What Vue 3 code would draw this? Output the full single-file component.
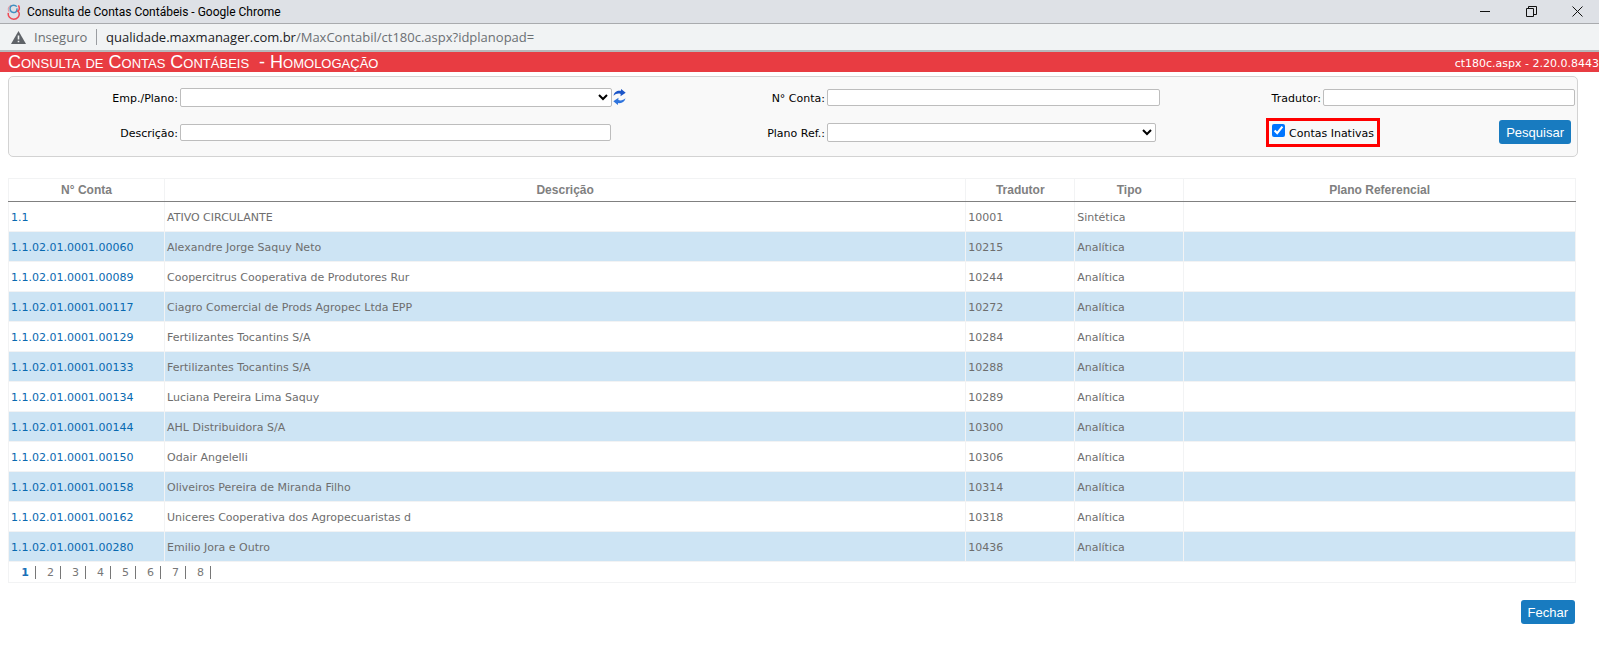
<template>
  <div class="window">
    <header class="titlebar">
      <svg class="favicon" viewBox="0 0 14 16" aria-hidden="true">
        <path d="M2.400 8.200C.4 5.800 1.200 2.300 4 1.200" fill="none" stroke="#e98a93" stroke-width="1" />
        <path d="M9.800 2.600C8.300.7 5 .6 3.600 2.700 2.100 5 3.400 8.300 6.400 8.600c2.600.2 4-1.900 3.500-4.200" fill="none" stroke="#3f8fc0" stroke-width="1.500" />
        <path d="M11.400 1.400c1.200 1.900 1.200 4-.2 5.600M1.300 8.800C.7 12.300 3.200 15.200 6.700 15.200c3.600 0 6.200-3 5.400-6.400-.5-1.100-1.300-1.700-2.300-2" fill="none" stroke="#ee4a55" stroke-width="1.500" />
      </svg>
      <span class="window-title">Consulta de Contas Contábeis - Google Chrome</span>
      <div class="window-controls">
        <button type="button" aria-label="Minimizar">
          <svg viewBox="0 0 11 11"><path d="M0 5.500h10" /></svg>
        </button>
        <button type="button" aria-label="Restaurar">
          <svg viewBox="0 0 11 11"><path d="M.5 2.500h7v8h-7zM2.500 2.500v-2h8v8h-3" /></svg>
        </button>
        <button type="button" aria-label="Fechar janela">
          <svg viewBox="0 0 11 11"><path d="M.5.5l10 10M10.500.5l-10 10" /></svg>
        </button>
      </div>
    </header>

    <div class="addressbar">
      <svg class="warning" viewBox="0 0 15 13" aria-hidden="true">
        <path d="M7.500 0L15 13H0z" fill="#5f6368" />
        <path d="M6.700 4.500h1.600v4H6.700zM6.700 9.700h1.600v1.600H6.700z" fill="#f1f3f4" />
      </svg>
      <span class="insecure">Inseguro</span>
      <span class="url"><span class="host">qualidade.maxmanager.com.br</span>/MaxContabil/ct180c.aspx?idplanopad=</span>
    </div>

    <div class="page-header">
      <h1>Consulta de Contas Contábeis &nbsp;- Homologação</h1>
      <span class="version">ct180c.aspx - 2.20.0.8443</span>
    </div>

    <main>
      <form class="filters" @submit.prevent>
        <label for="plano">Emp./Plano:</label>
        <div class="field">
          <select id="plano"></select>
          <button type="button" class="refresh" aria-label="Atualizar">
            <svg viewBox="0 0 13 16">
              <path d="M.6 6.700C1 3.200 4.400 1.300 7.800 2L8.100 0l4.600 3.800-5.200 3.400.2-2.300C5.200 4.200 2.600 4.700.6 6.700z" fill="#1b55c8" />
              <path d="M12.400 9.300c-.4 3.500-3.800 5.400-7.200 4.700L4.900 16 .3 12.200l5.200-3.400-.2 2.300c2.500.7 5.100.2 7.100-1.800z" fill="#2f74dd" />
            </svg>
          </button>
        </div>

        <label for="conta">N° Conta:</label>
        <div class="field"><input id="conta" type="text" /></div>

        <label for="tradutor">Tradutor:</label>
        <div class="field"><input id="tradutor" type="text" /></div>

        <label for="descricao">Descrição:</label>
        <div class="field field-descricao"><input id="descricao" type="text" /></div>

        <label for="planoRef">Plano Ref.:</label>
        <div class="field field-ref"><select id="planoRef"></select></div>

        <div class="actions">
          <div class="inactive">
            <input id="inativas" v-model="inativas" type="checkbox" />
            <label for="inativas">Contas Inativas</label>
          </div>
          <button type="submit" class="btn">Pesquisar</button>
        </div>
      </form>

      <table class="accounts">
        <colgroup>
          <col class="col-conta" />
          <col />
          <col class="col-small" />
          <col class="col-small" />
          <col class="col-ref" />
        </colgroup>
        <thead>
          <tr>
            <th v-for="c in colunas" :key="c">{{ c }}</th>
          </tr>
        </thead>
        <tbody>
          <tr v-for="c in contas" :key="c.conta">
            <td><a href="#">{{ c.conta }}</a></td>
            <td>{{ c.descricao }}</td>
            <td>{{ c.tradutor }}</td>
            <td>{{ c.tipo }}</td>
            <td></td>
          </tr>
        </tbody>
        <tfoot>
          <tr>
            <td colspan="5">
              <nav class="pager">
                <a v-for="p in 8" :key="p" href="#" :class="{ current: p === pagina }" @click.prevent="pagina = p">{{ p }}</a>
              </nav>
            </td>
          </tr>
        </tfoot>
      </table>

      <div class="footer">
        <button type="button" class="btn">Fechar</button>
      </div>
    </main>
  </div>
</template>

<script setup>
import { ref } from 'vue'

const inativas = ref(true)
const pagina = ref(1)

const colunas = ['N° Conta', 'Descrição', 'Tradutor', 'Tipo', 'Plano Referencial']

const contas = [
  { conta: '1.1', descricao: 'ATIVO CIRCULANTE', tradutor: '10001', tipo: 'Sintética' },
  { conta: '1.1.02.01.0001.00060', descricao: 'Alexandre Jorge Saquy Neto', tradutor: '10215', tipo: 'Analítica' },
  { conta: '1.1.02.01.0001.00089', descricao: 'Coopercitrus Cooperativa de Produtores Rur', tradutor: '10244', tipo: 'Analítica' },
  { conta: '1.1.02.01.0001.00117', descricao: 'Ciagro Comercial de Prods Agropec Ltda EPP', tradutor: '10272', tipo: 'Analítica' },
  { conta: '1.1.02.01.0001.00129', descricao: 'Fertilizantes Tocantins S/A', tradutor: '10284', tipo: 'Analítica' },
  { conta: '1.1.02.01.0001.00133', descricao: 'Fertilizantes Tocantins S/A', tradutor: '10288', tipo: 'Analítica' },
  { conta: '1.1.02.01.0001.00134', descricao: 'Luciana Pereira Lima Saquy', tradutor: '10289', tipo: 'Analítica' },
  { conta: '1.1.02.01.0001.00144', descricao: 'AHL Distribuidora S/A', tradutor: '10300', tipo: 'Analítica' },
  { conta: '1.1.02.01.0001.00150', descricao: 'Odair Angelelli', tradutor: '10306', tipo: 'Analítica' },
  { conta: '1.1.02.01.0001.00158', descricao: 'Oliveiros Pereira de Miranda Filho', tradutor: '10314', tipo: 'Analítica' },
  { conta: '1.1.02.01.0001.00162', descricao: 'Uniceres Cooperativa dos Agropecuaristas d', tradutor: '10318', tipo: 'Analítica' },
  { conta: '1.1.02.01.0001.00280', descricao: 'Emilio Jora e Outro', tradutor: '10436', tipo: 'Analítica' }
]
</script>

<style>
body {
  background: #fff;
}
</style>

<style scoped>
.window {
  font-family: Verdana, "DejaVu Sans", sans-serif;
  font-size: 11px;
  color: #000;
}

.window * {
  box-sizing: border-box;
}

.titlebar {
  display: flex;
  align-items: center;
  height: 24px;
  padding: 0 16px 0 7px;
  background: #dee1e6;
  border-bottom: 1px solid #a9abae;
  font-family: "Segoe UI", Roboto, sans-serif;
  font-size: 12px;
}

.favicon {
  width: 14px;
  height: 16px;
  margin-right: 6px;
}

.window-controls {
  display: flex;
  gap: 35px;
  margin-left: auto;
}

.window-controls button {
  display: flex;
  padding: 0;
  border: 0;
  background: none;
}

.window-controls svg {
  width: 11px;
  height: 11px;
  fill: none;
  stroke: #111;
}

.addressbar {
  display: flex;
  align-items: center;
  height: 28px;
  padding: 0 11px;
  background: #f1f3f4;
  border-bottom: 2px solid #b6b8ba;
  font-family: "Segoe UI", "Open Sans", sans-serif;
  font-size: 13px;
  color: #6b6f73;
}

.warning {
  width: 15px;
  height: 13px;
  margin-right: 8px;
}

.insecure {
  width: 63px;
  margin-right: 9px;
  line-height: 16px;
  border-right: 1px solid #9a9da1;
}

.host {
  color: #202124;
}

.page-header {
  display: flex;
  align-items: center;
  justify-content: space-between;
  height: 20px;
  padding-left: 8px;
  background: #e83c42;
  color: #fff;
}

.page-header h1 {
  margin: 0;
  font-family: Arial, "Liberation Sans", sans-serif;
  font-size: 18px;
  font-weight: 400;
  font-variant: small-caps;
  line-height: 20px;
}

.version {
  padding-top: 2px;
}

main {
  padding: 4px 23px 0 8px;
}

.filters {
  display: grid;
  grid-template-columns:
    minmax(0, 171fr) minmax(0, 447fr) minmax(0, 200fr)
    minmax(0, 333fr) minmax(0, 163fr) minmax(0, 252fr);
  grid-template-rows: 35px 34px;
  align-items: center;
  margin-right: -2px;
  padding: 3px 2px 7px 0;
  background: #f9f9f9;
  border: 1px solid #d3d3d3;
  border-radius: 5px;
}

.filters > label {
  padding: 2px 2px 0 0;
  text-align: right;
}

.field {
  display: flex;
  align-items: center;
}

.field input,
.field select {
  flex: 1;
  min-width: 0;
  height: 17px;
  padding: 0 2px;
  background-color: #fff;
  border: 1px solid #bdbdbd;
  border-radius: 2px;
}

.field select {
  height: 19px;
}

.field-descricao {
  padding-right: 16px;
}

.field-ref {
  padding-right: 4px;
}

.refresh {
  display: flex;
  margin-left: 1px;
  padding: 0 1px 1px 0;
  border: 0;
  background: none;
}

.refresh svg {
  width: 13px;
  height: 16px;
}

.actions {
  grid-column: span 2;
  display: flex;
  align-items: center;
  justify-content: space-between;
  padding: 0 4px 0 106px;
}

.inactive {
  display: flex;
  align-items: center;
  gap: 4px;
  height: 29px;
  padding: 0 3px;
  border: 3px solid #f00;
}

.inactive input {
  width: 13px;
  height: 13px;
  margin: 0 0 3px;
}

.inactive label {
  padding-top: 2px;
}

.btn {
  height: 24px;
  padding: 0 7px;
  background: #187bc0;
  border: 0;
  border-radius: 3px;
  color: #fff;
  font-family: Arial, "Liberation Sans", sans-serif;
  font-size: 13px;
}

.accounts {
  width: 100%;
  margin-top: 21px;
  table-layout: fixed;
  border-collapse: collapse;
  color: #6e6e6e;
}

.col-conta {
  width: 156px;
}

.col-small {
  width: 109px;
}

.col-ref {
  width: 25%;
}

.accounts th,
.accounts td {
  padding: 0 2px;
  border: 1px solid #f2f3f4;
}

.accounts th {
  height: 23px;
  border-bottom-color: #808080;
  color: #808080;
  font-family: Arial, "Liberation Sans", sans-serif;
  font-size: 12px;
}

.accounts tbody td {
  height: 30px;
  padding-top: 2px;
}

.accounts tbody tr:nth-child(even) {
  background: #cde4f4;
}

.accounts tbody a {
  color: #0869b0;
  text-decoration: none;
}

.accounts tfoot td {
  height: 21px;
}

.pager {
  display: flex;
}

.pager a {
  width: 25px;
  padding-right: 6px;
  border-right: 1px solid #777;
  color: #777;
  line-height: 13px;
  text-align: right;
  text-decoration: none;
}

.pager .current {
  color: #1a70b8;
  font-weight: 700;
}

.footer {
  display: flex;
  justify-content: flex-end;
  margin-top: 17px;
  padding-right: 1px;
}
</style>
